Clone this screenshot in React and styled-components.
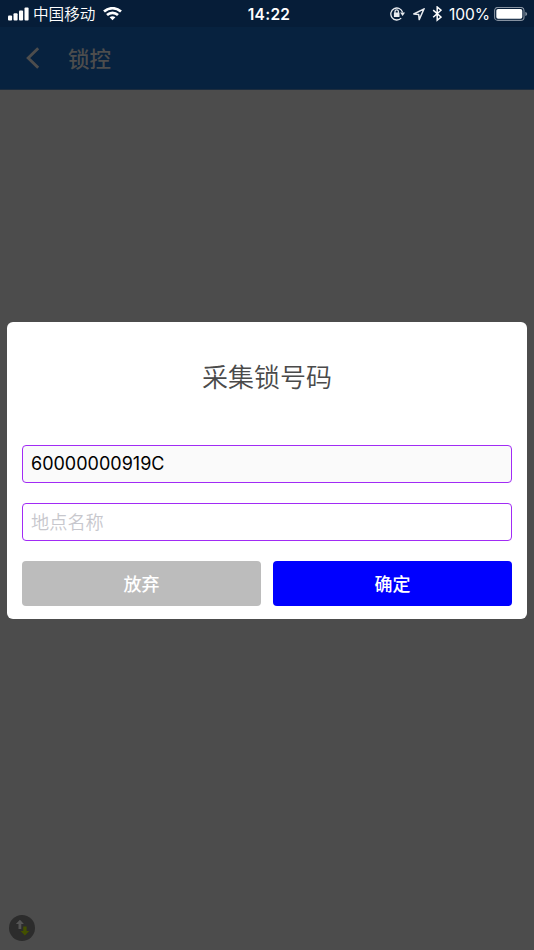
import React, { useState } from "react";
import styled, { createGlobalStyle } from "styled-components";

function App() {
	const [lockNumber, setLockNumber] = useState("60000000919C");
	const [place, setPlace] = useState("");

	return (
		<>
			<GlobalStyle />
			<Screen>
				<StatusBar>
					<StatusGroup>
						<SignalIcon />
						<Carrier>中国移动</Carrier>
						<WifiIcon />
					</StatusGroup>
					<Clock>14:22</Clock>
					<StatusGroup $end>
						<RotationLockIcon />
						<LocationIcon />
						<BluetoothIcon />
						<Percent>100%</Percent>
						<BatteryIcon />
					</StatusGroup>
				</StatusBar>
				<NavBar>
					<BackButton aria-label="返回">
						<svg width="14" height="22" viewBox="0 0 14 22" fill="none" stroke="currentColor" strokeWidth="2.9">
							<path d="M12.2 1.2L2.2 11L12.2 20.8" />
						</svg>
					</BackButton>
					<NavTitle>锁控</NavTitle>
				</NavBar>
				<Page>
					<SyncBadge>
						<SyncIcon />
					</SyncBadge>
				</Page>
				<Overlay>
					<Dialog role="dialog">
						<DialogTitle>采集锁号码</DialogTitle>
						<Field $filled value={lockNumber} onChange={(e) => setLockNumber(e.target.value)} />
						<Field placeholder="地点名称" value={place} onChange={(e) => setPlace(e.target.value)} />
						<Actions>
							<Button $color="#bcbcbc">放弃</Button>
							<Button $color="#0000ff">确定</Button>
						</Actions>
					</Dialog>
				</Overlay>
			</Screen>
		</>
	);
}

function SignalIcon() {
	return (
		<svg width="21" height="14" viewBox="0 0 21 14" fill="#fff">
			<rect x="0" y="8.4" width="4.1" height="5" rx="1" />
			<rect x="5.5" y="6.2" width="4.1" height="7.2" rx="1" />
			<rect x="11" y="3.6" width="4.1" height="9.8" rx="1" />
			<rect x="16.5" y="0.5" width="4.1" height="12.9" rx="1" />
		</svg>
	);
}

function WifiIcon() {
	return (
		<svg width="19" height="14" viewBox="0 0 19 14" fill="none" stroke="#fff" strokeWidth="2.7">
			<path d="M1 4.6C6 0.1 13 0.1 18 4.6" />
			<path d="M4 8C7.2 5.1 11.8 5.1 15 8" />
			<path d="M9.5 13.2L6.6 10.3C8.3 8.8 10.7 8.8 12.4 10.3Z" fill="#fff" stroke="none" />
		</svg>
	);
}

function RotationLockIcon() {
	return (
		<svg width="15" height="14" viewBox="0 0 15 14" fill="none" stroke="#e8ebef" strokeWidth="1.3">
			<path d="M11.2 11.1A6 6 0 1 1 12.6 5.4" />
			<path d="M10.1 5.6H15L12.6 8.9Z" fill="#e8ebef" stroke="none" />
			<rect x="3.9" y="5.6" width="5.6" height="4.4" rx="0.5" fill="#e8ebef" stroke="none" />
			<path d="M5 6V4.6A1.7 1.7 0 0 1 8.4 4.6V6" />
		</svg>
	);
}

function LocationIcon() {
	return (
		<svg width="13" height="13" viewBox="0 0 13 13" fill="none" stroke="#e8ebef" strokeWidth="1.5" strokeLinejoin="round">
			<path d="M12.1 0.8L1.8 6L6.7 6.5L7.2 11.6Z" />
		</svg>
	);
}

function BluetoothIcon() {
	return (
		<svg width="10" height="16" viewBox="0 0 10 16" fill="none" stroke="#fff" strokeWidth="1.5">
			<path d="M1.2 4.1L9 11L5.2 14.2V1L9 4.2L1.2 11.3" />
		</svg>
	);
}

function BatteryIcon() {
	return (
		<svg width="34" height="15" viewBox="0 0 34 15">
			<rect x="0.6" y="0.4" width="29.4" height="13" rx="3.2" fill="none" stroke="#8692a1" strokeWidth="1.1" />
			<rect x="2.3" y="2" width="26" height="9.8" rx="1.8" fill="#fff" />
			<path d="M31.3 4.7Q33.2 5.4 33.2 6.9T31.3 9.1Z" fill="#8692a1" />
		</svg>
	);
}

function SyncIcon() {
	return (
		<svg width="26" height="26" viewBox="0 0 26 26">
			<path d="M10.9 4.8L14.9 9H12.3V14H9.5V9H6.9Z" fill="#555" />
			<path d="M14.2 11.4H17.6V15.9H20.3L15.9 20.5L11.5 15.9H14.2Z" fill="#435000" />
		</svg>
	);
}

const GlobalStyle = createGlobalStyle`
	* {
		box-sizing: border-box;
	}

	body {
		margin: 0;
		font-family: Inter, "Noto Sans CJK SC", sans-serif;
	}
`;

const Screen = styled.div`
	position: relative;
	display: flex;
	flex-direction: column;
	width: 534px;
	height: 950px;
	overflow: hidden;
	background: #4c4c4c;
`;

const StatusBar = styled.div`
	display: grid;
	grid-template-columns: 1fr auto 1fr;
	align-items: center;
	height: 27px;
	padding: 0 6px 0 8px;
	background: #061d38;
	color: #fff;
`;

const StatusGroup = styled.div`
	display: flex;
	align-items: center;
	justify-content: ${(props) => (props.$end ? "flex-end" : "flex-start")};
	gap: ${(props) => (props.$end ? "7px" : "4px")};

	svg {
		flex: none;
	}
`;

const Carrier = styled.span`
	margin-right: 4px;
	padding-top: 1px;
	font-size: 15.6px;
	font-weight: 350;
	line-height: 27px;
`;

const Clock = styled.span`
	padding: 1px 0 0 2px;
	font-size: 15.5px;
	font-weight: 600;
	letter-spacing: 0.3px;
`;

const Percent = styled.span`
	margin-right: -3px;
	padding-top: 1px;
	font-size: 15.6px;
	letter-spacing: -0.1px;
`;

const NavBar = styled.div`
	display: flex;
	align-items: center;
	height: 63px;
	padding: 0 26px 1px;
	border-bottom: 1px solid #1c2c3e;
	background: #07223f;
	color: #4d4d4d;
`;

const BackButton = styled.button`
	display: flex;
	margin: 0;
	padding: 0;
	border: 0;
	background: none;
	color: inherit;
`;

const NavTitle = styled.div`
	margin-left: 28px;
	padding-top: 2px;
	font-size: 21.5px;
	font-weight: 500;
	line-height: 30px;
`;

const Page = styled.div`
	display: flex;
	flex: 1;
	align-items: flex-end;
	padding: 0 9px 9px;
`;

const SyncBadge = styled.div`
	width: 26px;
	height: 26px;
	border-radius: 50%;
	background: #2c2c2c;
`;

/* The dialog sits over the dimmed page */
const Overlay = styled.div`
	position: absolute;
	inset: 0;
	display: flex;
	align-items: center;
	justify-content: center;
	padding-bottom: 9.5px;
`;

const Dialog = styled.div`
	display: flex;
	flex-direction: column;
	width: 520px;
	height: 296.5px;
	padding: 0 15px 12.5px;
	border-radius: 6px;
	background: #fff;
`;

const DialogTitle = styled.div`
	flex: none;
	height: 123px;
	padding-top: 37px;
	color: #4a4a4a;
	font-size: 26px;
	font-weight: 350;
	line-height: 38px;
	text-align: center;
`;

const Field = styled.input`
	flex: none;
	width: 100%;
	height: 38px;
	margin-bottom: 20px;
	padding: ${(props) => (props.$filled ? "0 8px 2px" : "0 8px")};
	border: 1px solid #a12bf5;
	border-radius: 4px;
	outline: none;
	background: ${(props) => (props.$filled ? "#fafafa" : "#fff")};
	color: #000;
	font-family: inherit;
	font-size: 18px;

	&::placeholder {
		color: #c7c7cd;
		font-size: 18.2px;
		font-weight: 350;
	}
`;

const Actions = styled.div`
	display: grid;
	grid-template-columns: 1fr 1fr;
	gap: 12px;
`;

const Button = styled.button`
	height: 45px;
	padding: 0 0 2px;
	border: 0;
	border-radius: 4px;
	background: ${(props) => props.$color};
	color: #fff;
	font-family: inherit;
	font-size: 18px;
	font-weight: 500;
`;

export default App;
